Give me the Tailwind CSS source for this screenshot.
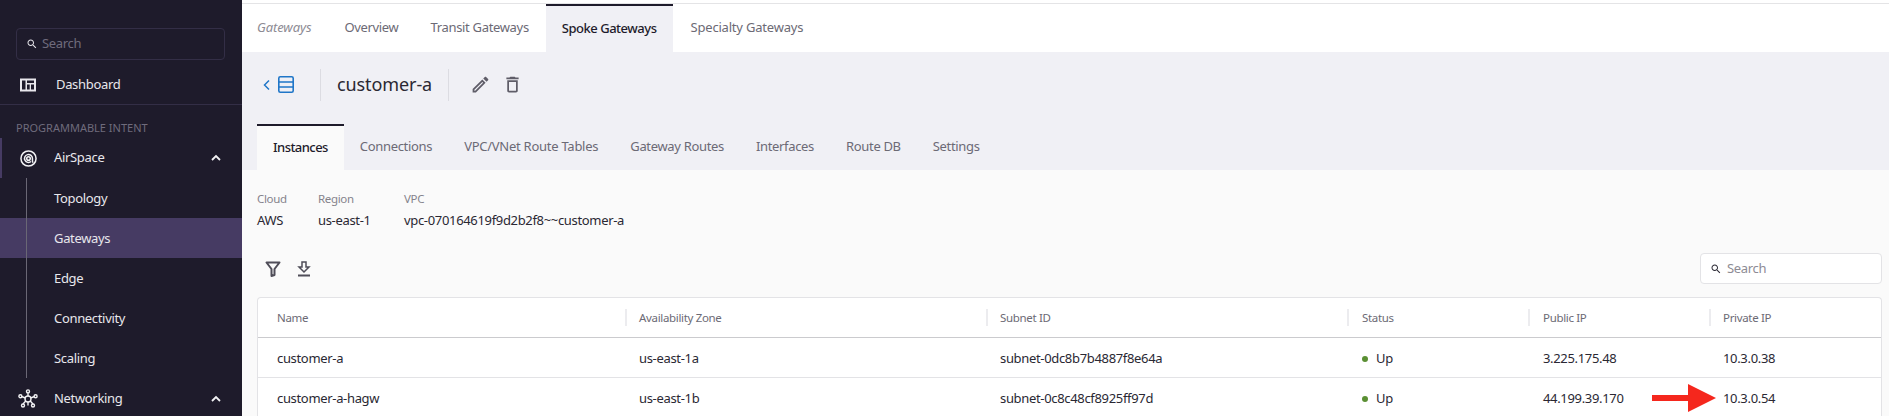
<!DOCTYPE html>
<html>
<head>
<meta charset="utf-8">
<script src="https://cdn.jsdelivr.net/npm/@tailwindcss/browser@4"></script>
</head>
<body class="m-0 h-[416px] w-[1889px] overflow-hidden font-['Noto_Sans',sans-serif] text-[13px] tracking-[-0.33px] text-[#2a2833]">
<div class="flex h-[416px] w-[1889px]">
  <aside class="h-[416px] w-[242px] shrink-0 overflow-hidden bg-[#1e1b2b] text-[#e8e7ec]">
    <div class="px-4 pt-7">
      <div class="flex h-8 w-[209px] items-center gap-[4px] rounded border border-[#332e46] pl-[9px] text-[#6f6b7c]">
        <svg class="h-3 w-3 text-[#e8e7ec]" viewBox="0 0 24 24" fill="currentColor"><path d="M15.5 14h-.79l-.28-.27C15.41 12.59 16 11.11 16 9.5 16 5.91 13.09 3 9.5 3S3 5.91 3 9.5 5.91 16 9.5 16c1.61 0 3.09-.59 4.23-1.57l.27.28v.79l5 4.99L20.49 19l-4.99-5zm-6 0C7.01 14 5 11.99 5 9.5S7.01 5 9.5 5 14 7.01 14 9.5 11.99 14 9.5 14z"/></svg>
        <span>Search</span>
      </div>
    </div>
    <div class="flex h-[45px] items-center border-b border-[#332e46] pl-5 pt-[6px]">
      <svg class="h-[14px] w-4" viewBox="0 0 16 14"><path fill="#e8e7ec" fill-rule="evenodd" d="M0 0.5h16v13H0zM2 2.5v9h3.5v-9zM7 2.5v2.5h7v-2.5zM7 6.5v5h2.7v-5zM11 6.5v5h3v-5z"/></svg>
      <span class="ml-5">Dashboard</span>
    </div>
    <div class="mt-[15px] pb-[2px] pl-4 text-[11px] leading-[16px] tracking-[0px] text-[#6f6b7c]">PROGRAMMABLE INTENT</div>
    <div class="relative flex h-10 items-center border-l-2 border-[#463b63] pl-[18px] pr-5">
      <svg class="h-[17px] w-[17px]" viewBox="0 0 18 18" fill="none" stroke="#f2f2f4" stroke-width="1.6"><circle cx="9" cy="9" r="8"/><circle cx="9" cy="9" r="1.9"/><path d="M14 13.6C12.8 13 13.2 10.6 13.2 9a4.2 4.2 0 1 0-1.5 3.2"/></svg>
      <span class="ml-[17px] flex-1">AirSpace</span>
      <svg class="h-3 w-3" viewBox="0 0 12 12" fill="none" stroke="#f2f2f4" stroke-width="1.8"><path d="M2 8l4-4 4 4"/></svg>
    </div>
    <div class="relative">
      <div class="absolute left-[26px] top-0 h-[200px] w-px bg-[#6a6775]"></div>
      <div class="flex h-10 items-center pl-[54px] pt-[2px]">Topology</div>
      <div class="flex h-10 items-center bg-[#463b63] pl-[54px] pt-[2px]">Gateways</div>
      <div class="flex h-10 items-center pl-[54px] pt-[2px]">Edge</div>
      <div class="flex h-10 items-center pl-[54px] pt-[2px]">Connectivity</div>
      <div class="flex h-10 items-center pl-[54px] pt-[2px]">Scaling</div>
    </div>
    <div class="flex h-10 items-center pl-[18px] pr-5 pt-[2px]">
      <svg class="h-5 w-5" viewBox="0 0 20 20" fill="none" stroke="#f2f2f4" stroke-width="1.4"><path d="M10 3.5V7M10 13v3.5M3.5 7.5l4 1.5M16.5 7.5l-4 1.5M5 15l3-3.2M15 15l-3-3.2"/><circle cx="10" cy="10" r="3"/><circle cx="10" cy="2.4" r="1.5"/><circle cx="2.4" cy="7.2" r="1.5"/><circle cx="17.6" cy="7.2" r="1.5"/><circle cx="5" cy="16.5" r="1.5"/><circle cx="15" cy="16.5" r="1.5"/></svg>
      <span class="ml-[16px] flex-1">Networking</span>
      <svg class="h-3 w-3" viewBox="0 0 12 12" fill="none" stroke="#f2f2f4" stroke-width="1.8"><path d="M2 8l4-4 4 4"/></svg>
    </div>
  </aside>

  <main class="flex h-[416px] min-w-0 flex-1 flex-col overflow-hidden bg-[#f0f0f5]">
    <div class="h-[3px] shrink-0 bg-white"></div>
    <nav class="flex h-[49px] shrink-0 items-stretch border-t border-[#e4e4e6] bg-white pl-[15px] text-[#6c6a75]">
      <span class="flex items-center pr-[17px] text-[13px] tracking-[-0.1px] italic text-[#8d8b94]">Gateways</span>
      <span class="flex items-center px-4">Overview</span>
      <span class="flex items-center pl-4 pr-[17px]">Transit Gateways</span>
      <span class="flex items-center border-t-2 border-[#1e1b2b] bg-[#f0f0f5] px-4 font-medium tracking-[-0.48px] text-[#1e1b2b]">Spoke Gateways</span>
      <span class="flex items-center pl-[18px] pr-4 tracking-[-0.2px]">Specialty Gateways</span>
    </nav>
    <div class="flex h-[72px] shrink-0 items-center pb-[7px] pl-[15px]">
      <div class="flex h-8 w-[64px] items-center border-r border-[#dcdce2] text-[#1f76c8]">
        <svg class="ml-[5px] h-3 w-[9px]" viewBox="0 0 9 12" fill="none" stroke="currentColor" stroke-width="1.5"><path d="M7 1.5L2.5 6 7 10.5"/></svg>
        <svg class="ml-[7px] h-[17px] w-[16px]" viewBox="0 0 16 17" fill="none" stroke="currentColor" stroke-width="1.6"><rect x="0.8" y="0.8" width="14.4" height="15.4" rx="1.5"/><path d="M1 6h14M1 11h14"/></svg>
      </div>
      <div class="flex h-8 w-[128px] items-center border-r border-[#dcdce2] pl-[16px] text-[18px] tracking-[-0.1px]">customer-a</div>
      <svg class="ml-[21px] h-[21px] w-[21px] text-[#5f5d68]" viewBox="0 0 24 24" fill="currentColor"><path d="M14.06 9.02l.92.92L5.92 19H5v-.92l9.06-9.06M17.66 3c-.25 0-.51.1-.7.29l-1.83 1.83 3.75 3.75 1.83-1.83c.39-.39.39-1.02 0-1.41l-2.34-2.34c-.2-.2-.45-.29-.71-.29zm-3.6 3.19L3 17.25V21h3.75L17.81 9.94l-3.75-3.75z"/></svg>
      <svg class="ml-[11px] h-[21px] w-[21px] text-[#5f5d68]" viewBox="0 0 24 24" fill="currentColor"><path d="M6 19c0 1.1.9 2 2 2h8c1.1 0 2-.9 2-2V7H6v12zM8 9h8v10H8V9zm7.5-5l-1-1h-5l-1 1H5v2h14V4z"/></svg>
    </div>
    <nav class="flex h-[46px] shrink-0 items-stretch pl-[15px] text-[#6c6a75]">
      <span class="flex items-center border-t-2 border-[#1e1b2b] bg-[#fafafa] px-4 font-medium tracking-[-0.55px] text-[#1e1b2b]">Instances</span>
      <span class="flex items-center px-4">Connections</span>
      <span class="flex items-center px-4 tracking-[-0.26px]">VPC/VNet Route Tables</span>
      <span class="flex items-center px-4">Gateway Routes</span>
      <span class="flex items-center px-4">Interfaces</span>
      <span class="flex items-center px-4">Route DB</span>
      <span class="flex items-center px-4">Settings</span>
    </nav>
    <section class="min-h-0 flex-1 bg-[#fafafa] pl-[15px] pr-[7px]">
      <div class="flex pt-[20px]">
        <div class="w-[61px]"><div class="text-[11.5px] leading-[18px] text-[#85838c]">Cloud</div><div class="mt-[2px] leading-[20px]">AWS</div></div>
        <div class="w-[86px]"><div class="text-[11.5px] leading-[18px] text-[#85838c]">Region</div><div class="mt-[2px] leading-[20px]">us-east-1</div></div>
        <div><div class="text-[11.5px] leading-[18px] text-[#85838c]">VPC</div><div class="mt-[2px] leading-[20px]">vpc-070164619f9d2b2f8~~customer-a</div></div>
      </div>
      <div class="mt-[23px] flex h-[31px] items-center">
        <svg class="ml-[8px] h-[18px] w-[16px] text-[#4f4d58]" viewBox="0 0 16 18" fill="none" stroke="currentColor" stroke-width="2"><path d="M1.5 2.5h13L9.5 9v6l-3 1V9z" stroke-linejoin="round"/></svg>
        <svg class="ml-[15px] h-[18px] w-[16px] text-[#4f4d58]" viewBox="0 0 16 18" fill="none" stroke="currentColor" stroke-width="1.5"><path d="M6 2h4v5h3l-5 5-5-5h3z"/><path d="M2 15.5h12" stroke-width="2"/></svg>
        <div class="ml-auto flex h-[31px] w-[182px] items-center gap-[5px] rounded border border-[#e3e3e6] bg-white pl-[9px] text-[#8d8b94]">
          <svg class="h-3 w-3 text-[#2a2833]" viewBox="0 0 24 24" fill="currentColor"><path d="M15.5 14h-.79l-.28-.27C15.41 12.59 16 11.11 16 9.5 16 5.91 13.09 3 9.5 3S3 5.91 3 9.5 5.91 16 9.5 16c1.61 0 3.09-.59 4.23-1.57l.27.28v.79l5 4.99L20.49 19l-4.99-5zm-6 0C7.01 14 5 11.99 5 9.5S7.01 5 9.5 5 14 7.01 14 9.5 11.99 14 9.5 14z"/></svg>
          <span>Search</span>
        </div>
      </div>
      <div class="mt-[13px] rounded-t border-x border-t border-[#e3e3e6] bg-white">
        <div class="grid h-10 grid-cols-[367px_361px_361px_181px_181px_1fr] items-center border-b border-[#cbcbce] text-[11.5px] text-[#6c6a75]">
          <div class="pl-[19px]">Name</div>
          <div class="border-l-2 border-[#ececef] pl-[12px]">Availability Zone</div>
          <div class="border-l-2 border-[#ececef] pl-[12px]">Subnet ID</div>
          <div class="border-l-2 border-[#ececef] pl-[13px]">Status</div>
          <div class="border-l-2 border-[#ececef] pl-[13px]">Public IP</div>
          <div class="border-l-2 border-[#ececef] pl-[12px]">Private IP</div>
        </div>
        <div class="grid h-10 grid-cols-[367px_361px_361px_181px_181px_1fr] items-center border-b border-[#e3e3e6] pt-[2px]">
          <div class="pl-[19px]">customer-a</div>
          <div class="pl-[14px]">us-east-1a</div>
          <div class="pl-[14px]">subnet-0dc8b7b4887f8e64a</div>
          <div class="flex items-center pl-[15px]"><span class="mr-[8px] h-[6px] w-[6px] rounded-full bg-[#5a8f33]"></span>Up</div>
          <div class="pl-[15px]">3.225.175.48</div>
          <div class="pl-[14px]">10.3.0.38</div>
        </div>
        <div class="relative grid h-10 grid-cols-[367px_361px_361px_181px_181px_1fr] items-center pt-[2px]">
          <div class="pl-[19px]">customer-a-hagw</div>
          <div class="pl-[14px]">us-east-1b</div>
          <div class="pl-[14px]">subnet-0c8c48cf8925ff97d</div>
          <div class="flex items-center pl-[15px]"><span class="mr-[8px] h-[6px] w-[6px] rounded-full bg-[#5a8f33]"></span>Up</div>
          <div class="pl-[15px]">44.199.39.170</div>
          <div class="pl-[14px]">10.3.0.54</div>
          <svg class="absolute left-[1394px] top-[6px] h-[28px] w-[64px]" viewBox="0 0 64 28"><path d="M0 11h36V0l28 14-28 14V17H0z" fill="#f5271d"/></svg>
        </div>
      </div>
    </section>
  </main>
</div>
</body>
</html>
